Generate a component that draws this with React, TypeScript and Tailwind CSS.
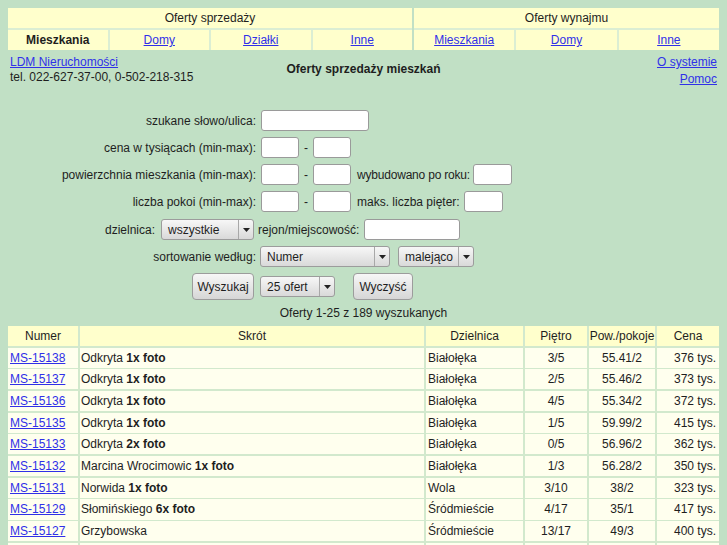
import React from "react";

const rows: [string, string, string, string, string, string, string][] = [
  ["MS-15138", "Odkryta", "1x foto", "Białołęka", "3/5", "55.41/2", "376 tys."],
  ["MS-15137", "Odkryta", "1x foto", "Białołęka", "2/5", "55.46/2", "373 tys."],
  ["MS-15136", "Odkryta", "1x foto", "Białołęka", "4/5", "55.34/2", "372 tys."],
  ["MS-15135", "Odkryta", "1x foto", "Białołęka", "1/5", "59.99/2", "415 tys."],
  ["MS-15133", "Odkryta", "2x foto", "Białołęka", "0/5", "56.96/2", "362 tys."],
  ["MS-15132", "Marcina Wrocimowic", "1x foto", "Białołęka", "1/3", "56.28/2", "350 tys."],
  ["MS-15131", "Norwida", "1x foto", "Wola", "3/10", "38/2", "323 tys."],
  ["MS-15129", "Słomińskiego", "6x foto", "Śródmieście", "4/17", "35/1", "417 tys."],
  ["MS-15127", "Grzybowska", "", "Śródmieście", "13/17", "49/3", "400 tys."],
];

const linkCls = "text-[#3030e8] underline";

function Arrow() {
  return (
    <svg width="7" height="4" viewBox="0 0 7 4">
      <path d="M0 0 L7 0 L3.5 4 Z" fill="#222" />
    </svg>
  );
}

function Select({ w, text }: { w: string; text: string }) {
  return (
    <div
      className={`${w} h-[21px] flex items-stretch border border-[#9c9c9c] rounded-[3px] bg-linear-to-b from-[#f7f7f7] to-[#d9d9d9]`}
    >
      <span className="flex-1 flex items-center pl-[6px] text-[12px]">{text}</span>
      <span className="w-[15px] flex items-center justify-center border-l border-[#a8a8a8]">
        <Arrow />
      </span>
    </div>
  );
}

function Input({ w }: { w: string }) {
  return <div className={`${w} h-[21px] bg-white border border-[#9a9a9a] rounded-[3px]`} />;
}

function Button({ w, text }: { w: string; text: string }) {
  return (
    <div
      className={`${w} h-[27px] flex items-center justify-center border border-[#9c9c9c] rounded-[4px] bg-linear-to-b from-[#f7f7f7] to-[#d6d6d6] text-[12px]`}
    >
      {text}
    </div>
  );
}

export default function App() {
  const cols = "grid grid-cols-[70px_344px_97px_62px_66px_1fr] gap-x-[2px]";
  return (
    <div className="h-[545px] overflow-hidden bg-[#c1e0c5] px-2 pt-2 text-[12px] text-[#1e1e1e] font-['Liberation_Sans',Arial,sans-serif]">
      {/* top navigation */}
      <div className="flex gap-[2px]">
        <div className="w-[404px] flex flex-col gap-[2px] bg-[#dbeed3]">
          <div className="h-[20px] bg-[#ffffcc] flex items-center justify-center">Oferty sprzedaży</div>
          <div className="grid grid-cols-4 gap-[2px]">
            <div className="h-[20px] bg-[#ffffcc] flex items-center justify-center font-bold">Mieszkania</div>
            <div className="h-[20px] bg-[#ffffcc] flex items-center justify-center">
              <span className={linkCls}>Domy</span>
            </div>
            <div className="h-[20px] bg-[#ffffcc] flex items-center justify-center">
              <span className={linkCls}>Działki</span>
            </div>
            <div className="h-[20px] bg-[#ffffcc] flex items-center justify-center">
              <span className={linkCls}>Inne</span>
            </div>
          </div>
        </div>
        <div className="flex-1 flex flex-col gap-[2px] bg-[#dbeed3]">
          <div className="h-[20px] bg-[#ffffcc] flex items-center justify-center">Oferty wynajmu</div>
          <div className="grid grid-cols-3 gap-[2px]">
            <div className="h-[20px] bg-[#ffffcc] flex items-center justify-center">
              <span className={linkCls}>Mieszkania</span>
            </div>
            <div className="h-[20px] bg-[#ffffcc] flex items-center justify-center">
              <span className={linkCls}>Domy</span>
            </div>
            <div className="h-[20px] bg-[#ffffcc] flex items-center justify-center">
              <span className={linkCls}>Inne</span>
            </div>
          </div>
        </div>
      </div>

      {/* info */}
      <div className="mt-[4px] grid grid-cols-[1fr_auto_1fr] px-[2px]">
        <div className="flex flex-col leading-[15px] pt-[1px]">
          <span className={linkCls + " self-start"}>LDM Nieruchomości</span>
          <span>tel. 022-627-37-00, 0-502-218-315</span>
        </div>
        <div className="pt-[8px] font-bold leading-[15px]">Oferty sprzedaży mieszkań</div>
        <div className="flex flex-col items-end leading-[17px]">
          <span className={linkCls}>O systemie</span>
          <span className={linkCls}>Pomoc</span>
        </div>
      </div>

      {/* search form */}
      <div className="mt-[22px] flex flex-col gap-[6px]">
        <div className="flex items-center h-[21px]">
          <span className="w-[248px] text-right">szukane słowo/ulica:</span>
          <div className="ml-[5px]">
            <Input w="w-[108px]" />
          </div>
        </div>
        <div className="flex items-center h-[21px]">
          <span className="w-[248px] text-right">cena w tysiącach (min-max):</span>
          <div className="ml-[5px] flex items-center gap-[5px]">
            <Input w="w-[38px]" />
            <span>-</span>
            <Input w="w-[38px]" />
          </div>
        </div>
        <div className="flex items-center h-[21px]">
          <span className="w-[248px] text-right">powierzchnia mieszkania (min-max):</span>
          <div className="ml-[5px] flex items-center gap-[5px]">
            <Input w="w-[38px]" />
            <span>-</span>
            <Input w="w-[38px]" />
            <span className="ml-[1px] tracking-[-0.2px]">wybudowano po roku:</span>
            <div className="-ml-[2px]">
              <Input w="w-[39px]" />
            </div>
          </div>
        </div>
        <div className="flex items-center h-[21px]">
          <span className="w-[248px] text-right">liczba pokoi (min-max):</span>
          <div className="ml-[5px] flex items-center gap-[5px]">
            <Input w="w-[38px]" />
            <span>-</span>
            <Input w="w-[38px]" />
            <span className="ml-[1px]">maks. liczba pięter:</span>
            <div className="-ml-[1px]">
              <Input w="w-[39px]" />
            </div>
          </div>
        </div>
        <div className="flex items-center h-[21px] mt-[1px]">
          <span className="w-[147px] text-right">dzielnica:</span>
          <div className="ml-[6px] flex items-center">
            <Select w="w-[93px]" text="wszystkie" />
            <span className="ml-[4px]">rejon/miejscowość:</span>
            <div className="ml-[5px]">
              <Input w="w-[96px]" />
            </div>
          </div>
        </div>
        <div className="flex items-center h-[21px]">
          <span className="w-[248px] text-right">sortowanie według:</span>
          <div className="ml-[4px] flex items-center gap-[8px]">
            <Select w="w-[130px]" text="Numer" />
            <Select w="w-[76px]" text="malejąco" />
          </div>
        </div>
        <div className="flex items-center h-[27px] pl-[184px]">
          <Button w="w-[62px]" text="Wyszukaj" />
          <div className="ml-[6px]">
            <Select w="w-[75px]" text="25 ofert" />
          </div>
          <div className="ml-[18px]">
            <Button w="w-[60px]" text="Wyczyść" />
          </div>
        </div>
      </div>

      <div className="mt-[6px] text-center leading-[15px]">Oferty 1-25 z 189 wyszukanych</div>

      {/* results table */}
      <div className="mt-[5px] flex flex-col gap-y-[1.5px] bg-[#d2e9cd]">
        <div className={cols}>
          {["Numer", "Skrót", "Dzielnica", "Piętro", "Pow./pokoje", "Cena"].map((h) => (
            <div key={h} className="h-[20px] bg-[#ffffcc] flex items-center justify-center">
              {h}
            </div>
          ))}
        </div>
        {rows.map((r) => (
          <div key={r[0]} className={cols}>
            <div className="h-[20.2px] bg-[#ffffee] flex items-center pl-[2px]">
              <span className={linkCls}>{r[0]}</span>
            </div>
            <div className="h-[20.2px] bg-[#ffffee] flex items-center pl-[1px] whitespace-pre">
              {r[1]}
              {r[2] ? (
                <>
                  {" "}
                  <b>{r[2]}</b>
                </>
              ) : null}
            </div>
            <div className="h-[20.2px] bg-[#ffffee] flex items-center pl-[2px]">{r[3]}</div>
            <div className="h-[20.2px] bg-[#ffffee] flex items-center justify-center">{r[4]}</div>
            <div className="h-[20.2px] bg-[#ffffee] flex items-center justify-center">{r[5]}</div>
            <div className="h-[20.2px] bg-[#ffffee] flex items-center justify-end pr-[3px]">{r[6]}</div>
          </div>
        ))}
        <div className={cols}>
          <div className="h-[20px] bg-[#ffffee]" />
          <div className="h-[20px] bg-[#ffffee]" />
          <div className="h-[20px] bg-[#ffffee]" />
          <div className="h-[20px] bg-[#ffffee]" />
          <div className="h-[20px] bg-[#ffffee]" />
          <div className="h-[20px] bg-[#ffffee]" />
        </div>
      </div>
    </div>
  );
}
